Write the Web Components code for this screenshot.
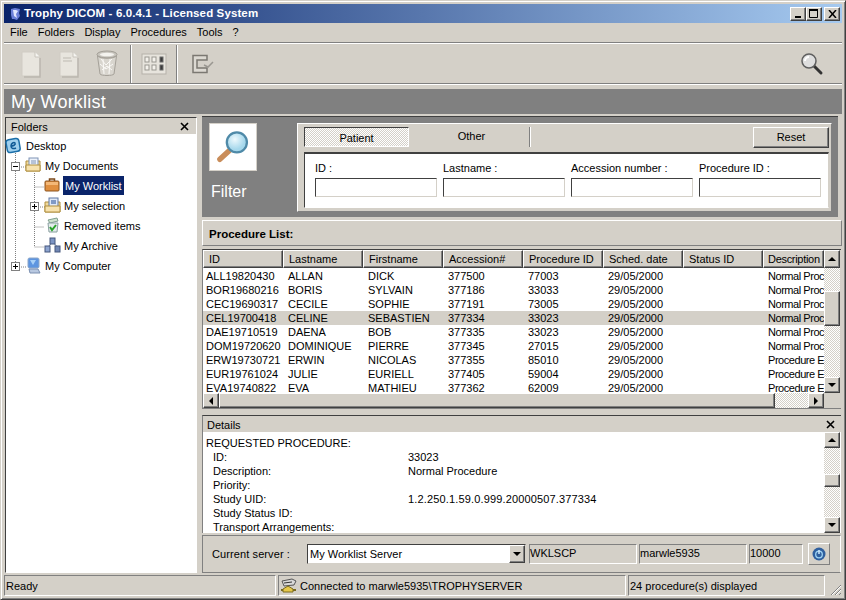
<!DOCTYPE html>
<html><head><meta charset="utf-8"><style>
html,body{margin:0;padding:0;background:#d4d0c8}
body{font:11px "Liberation Sans",Arial,sans-serif;color:#000}
</style></head><body>
<x-app>
  <x-titlebar slot="top">Trophy DICOM - 6.0.4.1 - Licensed System</x-titlebar>
  <x-menubar slot="top"><span>File</span><span>Folders</span><span>Display</span><span>Procedures</span><span>Tools</span><span>?</span></x-menubar>
  <x-toolbar slot="top"></x-toolbar>
  <x-banner slot="top">My Worklist</x-banner>
  <x-folders slot="left"></x-folders>
  <x-filter slot="right"></x-filter>
  <x-listbar slot="right">Procedure List:</x-listbar>
  <x-grid slot="right"></x-grid>
  <x-details slot="right"></x-details>
  <x-serverbar slot="right"></x-serverbar>
  <x-statusbar slot="bottom"></x-statusbar>
</x-app>
<script>
const B='#d4d0c8';
const bevelOut='border:1px solid;border-color:#fff #404040 #404040 #fff;box-shadow:inset -1px -1px 0 #808080';
const sunken='border:1px solid;border-color:#808080 #fff #fff #808080';
const dither='background:repeating-conic-gradient(#fff 0 25%,#d4d0c8 0 50%) 0 0/2px 2px';
function def(name,css,html,init){
  customElements.define(name,class extends HTMLElement{
    constructor(){super();this.attachShadow({mode:'open'});}
    connectedCallback(){
      const h=typeof html==='function'?html(this):html;
      this.shadowRoot.innerHTML='<style>'+css+'</style>'+h;
    }
  });
}
const closeX='<svg width="9" height="9" viewBox="0 0 9 9"><path d="M1 1L8 8M8 1L1 8" stroke="#000" stroke-width="1.6" fill="none"/></svg>';

def('x-app',`:host{display:flex;flex-direction:column;width:846px;height:600px;box-sizing:border-box;background:${B};
  border:1px solid;border-color:#d4d0c8 #404040 #404040 #d4d0c8;box-shadow:inset 1px 1px 0 #fff,inset -1px -1px 0 #808080;padding:3px 3px 3px 3px;overflow:hidden}
  .body{display:flex;height:459px;flex:none}
  .left{width:194px;flex:none;padding-top:3px;box-sizing:border-box}
  .right{margin-left:4px;width:640px;flex:none;display:flex;flex-direction:column;padding-top:2px;box-sizing:border-box}
  ::slotted(*){flex:none}
  `,`<slot name="top"></slot><div class="body"><div class="left"><slot name="left"></slot></div><div class="right"><slot name="right"></slot></div></div><slot name="bottom"></slot>`);

def('x-titlebar',`:host{display:flex;align-items:center;height:19px;background:linear-gradient(90deg,#0a246a,#a6caf0);color:#fff;font-weight:bold;font-size:11.5px;padding:0 2px 0 4px;box-sizing:border-box}
  .ic{margin-right:1px;display:flex}
  .t{flex:1;letter-spacing:.12px;padding-bottom:2px}
  .b{width:16px;height:14px;background:${B};box-sizing:border-box;${bevelOut};display:flex;align-items:center;justify-content:center}
  .b:last-child{margin-left:2px}`,
  `<span class="ic"><svg width="15" height="14" viewBox="0 0 15 14"><path d="M3 2l4-1 5 1-1 4 1 3-3 4-3-1-2 0-1-4z" fill="#6a7fd8"/><path d="M5 3l3 0 2 1-2 3 1 4-3-2z" fill="#dfe6ff"/></svg></span>
  <span class="t"><slot></slot></span>
  <span class="b"><svg width="8" height="8"><rect x="1" y="6" width="6" height="2"/></svg></span>
  <span class="b"><svg width="10" height="9"><path d="M.5 1.5h8v7h-8z" fill="none" stroke="#000"/><path d="M0 1h9" stroke="#000" stroke-width="2"/></svg></span>
  <span class="b"><svg width="9" height="8" viewBox="0 0 9 8"><path d="M1 0L8 8M8 0L1 8" stroke="#000" stroke-width="1.5"/></svg></span>`);

def('x-menubar',`:host{display:flex;height:20px;align-items:center;padding:0 0 2px 6px;box-sizing:border-box;border-bottom:1px solid #808080}
  ::slotted(span){margin-right:10px}`,`<slot></slot>`);

const docIcon=(lines)=>`<svg width="22" height="28" viewBox="0 0 22 28"><path d="M2 2h13l5 5v19H2z" fill="#e8e5de" stroke="#d0ccc4"/><path d="M15 2v5h5" fill="#f6f5f1" stroke="#c8c4bc"/><path d="M20 8v19H4" fill="none" stroke="#bab6ae" stroke-width="1.4"/>${lines?'<path d="M5 8h8M5 11h9" stroke="#bdb9b1"/>':''}</svg>`;
def('x-toolbar',`:host{display:flex;align-items:center;border-top:1px solid #fff;border-bottom:1px solid #808080;box-shadow:0 1px 0 #fff;box-sizing:border-box;padding-left:8px;margin-bottom:5px;height:41px}
  .i{display:flex;width:38px;justify-content:center;flex:none}
  .sep{width:2px;height:38px;background:linear-gradient(90deg,#808080 1px,#fff 1px);flex:none}
  .sp{flex:1}`,
  `<span class="i">${docIcon(0)}</span><span class="i">${docIcon(1)}</span>
   <span class="i"><svg width="24" height="27" viewBox="0 0 24 27"><ellipse cx="12" cy="4.5" rx="10" ry="3.5" fill="#c9c6bf" stroke="#a09c94"/><ellipse cx="12" cy="4.5" rx="7" ry="1.8" fill="#f4f3ef"/><path d="M2.5 6l2.5 18c1 2 13 2 14 0l2.5-18c-3 3-16 3-19 0z" fill="#d8d5ce" stroke="#a5a199"/><path d="M6 9l5 6 6-6M5 14l6 5 7-5M7 20l5-4 5 4M8 9l1 15M15 9l-1 15" stroke="#fbfaf7" stroke-width="1" fill="none"/></svg></span>
   <span style="width:4px;flex:none"></span><span class="sep"></span>
   <span class="i" style="width:44px"><svg width="26" height="22" viewBox="0 0 26 22"><rect x="1" y="1" width="24" height="20" fill="#e7e4dd" stroke="#b5b1a9"/><g fill="#f4f2ec" stroke="#9a9791"><rect x="4" y="4" width="4" height="5"/><rect x="11" y="4" width="4" height="5"/><rect x="4" y="12" width="4" height="5"/><rect x="11" y="12" width="4" height="5"/></g><g fill="#3a3a3a" stroke="#6b6b6b"><rect x="19" y="4" width="3" height="5"/><rect x="19" y="12" width="3" height="5"/></g></svg></span>
   <span class="sep"></span>
   <span class="i" style="width:50px"><svg width="24" height="20" viewBox="0 0 24 20"><path d="M16 6V1.500H2V18.500H16V14H6V6z" fill="#dcd9d2" stroke="#7b7872" stroke-width="1.500"/><path d="M13 11l4 2 5-5" fill="none" stroke="#9a9791" stroke-width="1.500"/></svg></span>
   <span class="sp"></span>
   <span style="margin-right:18px;display:flex"><svg width="24" height="24" viewBox="0 0 24 24"><path d="M13 13l8 8" stroke="#333" stroke-width="3" stroke-linecap="round"/><circle cx="9" cy="9" r="7" fill="#dedede" stroke="#5f5f5f" stroke-width="1.500"/><path d="M5 9a4 4 0 0 1 4-4" stroke="#fff" stroke-width="2" fill="none"/></svg></span>`);

def('x-banner',`:host{display:flex;align-items:center;height:25px;background:#808080;color:#fff;font-size:18px;padding:1px 0 0 7px;box-sizing:border-box;letter-spacing:.2px}`,`<slot></slot>`);

const treeIcons={
 desk:`<svg width="17" height="17" viewBox="0 0 17 17"><rect x="1.500" y="2" width="13" height="13" rx="3" transform="rotate(-10 8 8)" fill="#9fd0ee" stroke="#1a6ea8" stroke-width="1.500"/><path d="M6 9c2 0 5-1 4-3-1-1-4 0-4 3 0 3 3 3 5 2" fill="none" stroke="#0f5a96" stroke-width="1.500"/></svg>`,
 docs:`<svg width="17" height="15" viewBox="0 0 17 15"><path d="M1 4h14v10H1z" fill="#f0d89a" stroke="#b08f3f"/><rect x="4" y="1" width="9" height="9" fill="#eef3fb" stroke="#7f93b5"/><path d="M6 4h5M6 6h5" stroke="#7f93b5"/><path d="M1 8h14v6H1z" fill="#f7e2ad" stroke="#b08f3f"/></svg>`,
 work:`<svg width="17" height="16" viewBox="0 0 17 16"><path d="M5.500 4V2h5v2" fill="none" stroke="#7c4a1c" stroke-width="1.500"/><path d="M1 5q0-1 1-1h12q1 0 1 1v8q0 1-1 1H2q-1 0-1-1z" fill="#e08f3f" stroke="#8c5520"/><path d="M2 5h12v3H2z" fill="#f4b877"/></svg>`,
 sel:`<svg width="17" height="16" viewBox="0 0 17 16"><path d="M1 5h15v10H1z" fill="#f0d89a" stroke="#b08f3f"/><rect x="5" y="1" width="9" height="9" fill="#dfe9f7" stroke="#5f78a5"/><rect x="7" y="3" width="5" height="4" fill="#7f9ac6"/><path d="M1 9h15v6H1z" fill="#f7e2ad" stroke="#b08f3f"/></svg>`,
 rem:`<svg width="17" height="16" viewBox="0 0 17 16"><path d="M4 3l9-2 1 3-8 2z" fill="#cfe4cf" stroke="#7f9f8f"/><path d="M4 6h10l-1 9H5z" fill="#e4ecec" stroke="#8aa0a0"/><path d="M6 10l2 3 4-5" stroke="#28a228" stroke-width="2" fill="none"/></svg>`,
 arch:`<svg width="17" height="16" viewBox="0 0 17 16"><path d="M8.500 5L4 10M8.500 5l5 5" stroke="#6a7a98"/><rect x="6" y="1" width="5" height="6" fill="#7d95c4" stroke="#44567c"/><rect x="1" y="9" width="5" height="6" fill="#8ea5d0" stroke="#44567c"/><rect x="11" y="9" width="5" height="6" fill="#7288b5" stroke="#44567c"/></svg>`,
 comp:`<svg width="17" height="17" viewBox="0 0 17 17"><rect x="3" y="1" width="11" height="10" rx="1.500" fill="#5d95e0" stroke="#8fa8c8"/><path d="M5 3h6l-3 5z" fill="#a8d0f6"/><path d="M4 12h9l2 4H5z" fill="#b8c8e0" stroke="#7a8fb0"/></svg>`
};
const box=(p,l)=>`<span class="box" style="left:${l}px"><svg width="9" height="9"><rect x=".5" y=".5" width="8" height="8" fill="#fff" stroke="#808080"/><path d="M2 4.500h5${p?'M4.500 2v5':''}" stroke="#000"/></svg></span>`;
def('x-folders',`:host{display:flex;flex-direction:column;height:456px;box-sizing:border-box;margin-left:1px;width:192px;border:1px solid;border-color:#404040 #fff #fff #404040;background:#fff}
  .h{height:16px;background:${B};display:flex;align-items:center;justify-content:space-between;padding:1px 7px 0 5px;box-sizing:border-box;flex:none}
  .tree{position:relative;flex:1;padding-top:2px}
  .lines{position:absolute;left:0;top:-1px}
  .r{height:20px;display:flex;align-items:center;position:relative}
  .ic{position:absolute;top:1px;display:flex}
  .box{position:absolute;top:6px;display:flex}
  .tx{position:absolute;top:3px;line-height:14px;padding:0 2px;white-space:nowrap}
  .sel{background:#0a246a;color:#fff;top:0;line-height:20px;height:19px}`,
  ()=>`<div class="h"><span>Folders</span>${closeX}</div><div class="tree">
  <svg class="lines" width="100" height="140" fill="none" stroke="#808080" stroke-dasharray="1 1"><path d="M9.500 20V134M15 34h5M28.500 40V114M28.500 54h10M34 74h5M28.500 94h10M28.500 114h10M15 134h5"/></svg>
  <div class="r"><span class="ic" style="left:-1px">${treeIcons.desk}</span><span class="tx" style="left:18px">Desktop</span></div>
  <div class="r">${box(0,5)}<span class="ic" style="left:19px">${treeIcons.docs}</span><span class="tx" style="left:37px">My Documents</span></div>
  <div class="r"><span class="ic" style="left:38px">${treeIcons.work}</span><span class="tx sel" style="left:57px">My Worklist</span></div>
  <div class="r">${box(1,24)}<span class="ic" style="left:38px">${treeIcons.sel}</span><span class="tx" style="left:56px">My selection</span></div>
  <div class="r"><span class="ic" style="left:38px">${treeIcons.rem}</span><span class="tx" style="left:56px">Removed items</span></div>
  <div class="r"><span class="ic" style="left:38px">${treeIcons.arch}</span><span class="tx" style="left:56px">My Archive</span></div>
  <div class="r">${box(1,5)}<span class="ic" style="left:19px">${treeIcons.comp}</span><span class="tx" style="left:37px">My Computer</span></div>
  </div>`);

def('x-field',`:host{display:flex;flex-direction:column;width:122px;flex:none}
  .l{height:18px;line-height:17px}
  .i{height:19px;background:#fff;box-sizing:border-box;border:1px solid;border-color:#404040 #d4d0c8 #d4d0c8 #404040}`,
  `<span class="l"><slot></slot></span><span class="i"></span>`);
def('x-filter',`:host{display:flex;height:101px;width:636px;background:#808080;box-sizing:border-box;border-top:1px solid #404040;padding:6px 6px 5px 7px;flex:none}
  .lg{width:88px;flex:none;display:flex;flex-direction:column}
  .ib{width:48px;height:48px;box-sizing:border-box;background:#fff;border:1px solid #d4d0c8;display:flex;align-items:center;justify-content:center}
  .ft{color:#fff;font-size:16px;margin:12px 0 0 2px}
  .p{flex:1;background:${B};border:1px solid;border-color:#fff #808080 #808080 #fff;box-sizing:border-box;padding:3px 2px 5px 6px;display:flex;flex-direction:column}
  .tabs{display:flex;height:20px;flex:none}
  .tab{text-align:center;line-height:20px;box-sizing:border-box}
  .t1{width:105px;${dither};border:1px solid;border-color:#404040 #fff #fff #404040}
  .t2{width:116px;margin-left:5px;border-right:1px solid #808080;box-shadow:1px 0 0 #fff;line-height:19px}
  .sp{flex:1}
  .rs{width:76px;height:21px;background:${B};box-sizing:border-box;${bevelOut};text-align:center;line-height:19px}
  .w{margin-top:5px;flex:none;height:56px;background:#fff;border:1px solid;border-color:#404040 #d4d0c8 #fff #404040;box-sizing:border-box;display:flex;gap:6px;padding:6px 0 0 9px;border-top-width:2px}
  `,`<div class="lg"><div class="ib"><svg width="34" height="34" viewBox="0 0 44 44"><defs><radialGradient id="g" cx=".4" cy=".35"><stop offset="0" stop-color="#eef9fd"/><stop offset="1" stop-color="#a6d8ec"/></radialGradient></defs><path d="M17 27L5 38" stroke="#c98d5a" stroke-width="7" stroke-linecap="round"/><circle cx="27" cy="16" r="13" fill="url(#g)" stroke="#4f8aa8" stroke-width="3"/></svg></div><div class="ft">Filter</div></div>
  <div class="p"><div class="tabs"><div class="tab t1">Patient</div><div class="tab t2">Other</div><div class="sp"></div><div class="rs">Reset</div></div>
  <div class="w" style="padding-left:10px"><x-field>ID :</x-field><x-field>Lastname :</x-field><x-field>Accession number :</x-field><x-field>Procedure ID :</x-field></div></div>`);

def('x-listbar',`:host{display:block;height:26px;line-height:27px;margin-top:3px;padding-left:6px;font-weight:bold;background:${B};border:1px solid;border-color:#fff #808080 #808080 #fff;box-sizing:border-box;flex:none;font-size:11.500px}`,`<slot></slot>`);

const arrows={u:'M4 1L8 5H0z',d:'M0 1H8L4 5z',l:'M5 0V8L1 4z',r:'M1 0V8L5 4z'};
def('x-sbb',`:host{display:flex;align-items:center;justify-content:center;width:16px;height:16px;flex:none;box-sizing:border-box;background:${B};${bevelOut}}`,
  (e)=>{const a=e.getAttribute('d');const h=a=='u'||a=='d';return `<svg width="${h?8:6}" height="${h?6:8}"><path d="${arrows[a]}"/></svg>`});
def('x-vscroll',`:host{display:flex;flex-direction:column;width:16px;flex:none;${dither}}
  .s{flex:none}.t{flex:none;box-sizing:border-box;background:${B};${bevelOut}}.f{flex:1}`,
  (e)=>`<x-sbb d="u" style="height:${e.getAttribute('bh')||16}px"></x-sbb><div class="s" style="height:${e.getAttribute('a')}px"></div><div class="t" style="height:${e.getAttribute('t')}px"></div><div class="f"></div><x-sbb d="d"></x-sbb>`);
def('x-hscroll',`:host{display:flex;height:15px;flex:none;${dither}}
  .t{width:556px;box-sizing:border-box;background:${B};${bevelOut};flex:none}.f{flex:1}`,
  `<x-sbb d="l" style="height:15px"></x-sbb><div class="t"></div><div class="f"></div><x-sbb d="r" style="height:15px"></x-sbb>`);

const cols=['ID','Lastname','Firstname','Accession#','Procedure ID','Sched. date','Status ID','Description'];
const N='Normal Proc',E='Procedure E';
const rows=[['ALL19820430','ALLAN','DICK','377500','77003',N],['BOR19680216','BORIS','SYLVAIN','377186','33033',N],['CEC19690317','CECILE','SOPHIE','377191','73005',N],['CEL19700418','CELINE','SEBASTIEN','377334','33023',N],['DAE19710519','DAENA','BOB','377335','33023',N],['DOM19720620','DOMINIQUE','PIERRE','377345','27015',N],['ERW19730721','ERWIN','NICOLAS','377355','85010',E],['EUR19761024','JULIE','EURIELL','377405','59004',E],['EVA19740822','EVA','MATHIEU','377362','62009',E]];
def('x-grid',`:host{display:flex;margin-top:3px;height:160px;flex:none;border-top:1px solid #404040;border-left:1px solid #808080;box-sizing:border-box;width:639px;border-bottom:1px solid #808080}
  .m{flex:1;display:flex;flex-direction:column;min-width:0}
  .hd{display:flex;height:18px;flex:none;overflow:hidden}
  .hc{width:80px;flex:none;box-sizing:border-box;${bevelOut};background:${B};line-height:16px;padding-left:5px;white-space:nowrap}
  .hc:last-child{width:61px;padding-left:4px;letter-spacing:-.3px}
  .bd{flex:1;background:#fff;padding-top:1px;overflow:hidden}
  .r{display:flex;height:14px;line-height:14px;white-space:nowrap}
  .r.s{background:${B}}
  .c{width:80px;flex:none;box-sizing:border-box}
  .c:nth-child(1){padding-left:3px}.c:nth-child(n+2){padding-left:5px}
  .c:last-child{width:61px;padding-left:5px;letter-spacing:-.45px}
  .col{width:17px;flex:none;display:flex;flex-direction:column}`,
  `<div class="m"><div class="hd">${cols.map(c=>`<div class="hc">${c}</div>`).join('')}</div>
  <div class="bd">${rows.map((r,i)=>`<div class="r${i==3?' s':''}"><div class="c">${r[0]}</div><div class="c">${r[1]}</div><div class="c">${r[2]}</div><div class="c">${r[3]}</div><div class="c">${r[4]}</div><div class="c">29/05/2000</div><div class="c"></div><div class="c">${r[5]}</div></div>`).join('')}</div>
  <x-hscroll></x-hscroll></div>
  <div class="col"><x-vscroll a="23" t="35" bh="18" style="flex:1"></x-vscroll><div style="height:15px;flex:none;background:${B}"></div></div>`);

const det=[['REQUESTED PROCEDURE:',''],['ID:','33023'],['Description:','Normal Procedure'],['Priority:',''],['Study UID:','1.2.250.1.59.0.999.20000507.377334'],['Study Status ID:',''],['Transport Arrangements:','']];
def('x-details',`:host{display:flex;flex-direction:column;margin-top:6px;height:118px;flex:none;box-sizing:border-box;border-top:1px solid #404040;border-left:1px solid #808080;width:639px}
  .h{height:16px;background:${B};display:flex;align-items:center;justify-content:space-between;padding:1px 6px 0 4px;box-sizing:border-box;flex:none}
  .b{flex:1;display:flex;background:#fff;min-height:0}
  .t{flex:1;overflow:hidden;padding:4px 0 0 3px}
  .l{height:14px;line-height:14px;display:flex;white-space:nowrap}
  .l .k{width:202px;flex:none;padding-left:7px;box-sizing:border-box}
  .l.f .k{padding-left:0}
  .u{letter-spacing:.15px}`,
  `<div class="h"><span>Details</span>${closeX}</div><div class="b"><div class="t">${det.map((d,i)=>`<div class="l${i?'':' f'}"><span class="k">${d[0]}</span><span class="${i==4?'u':''}">${d[1]}</span></div>`).join('')}</div><x-vscroll a="26" t="13" style="margin-right:1px"></x-vscroll></div>`);

def('x-serverbar',`:host{display:flex;align-items:center;height:38px;margin-top:2px;flex:none;box-sizing:border-box;border:1px solid;border-color:#808080 #fff #808080 #808080;padding-left:9px;width:639px}
  .lb{width:95px;flex:none;letter-spacing:.1px}
  .sel{width:219px;height:20px;flex:none;box-sizing:border-box;background:#fff;border:1px solid;border-color:#404040 #d4d0c8 #d4d0c8 #404040;display:flex;align-items:center;justify-content:space-between;padding-left:2px}
  .f{height:20px;flex:none;box-sizing:border-box;${sunken};line-height:17px;margin-left:2px}
  .btn{width:22px;height:22px;margin-left:5px;flex:none;box-sizing:border-box;border:1px solid;border-color:#fff #808080 #808080 #fff;display:flex;align-items:center;justify-content:center}`,
  `<span class="lb">Current server :</span><div class="sel"><span>My Worklist Server</span><x-sbb d="d" style="height:18px"></x-sbb></div>
  <div class="f" style="width:108px;margin-left:3px">WKLSCP</div><div class="f" style="width:108px">marwle5935</div><div class="f" style="width:54px">10000</div>
  <div class="btn"><svg width="14" height="14" viewBox="0 0 14 14"><circle cx="7" cy="7" r="6.500" fill="#2f5f9e"/><circle cx="7" cy="7.500" r="3.300" fill="none" stroke="#9fd4f5" stroke-width="1.300"/><path d="M7 3v4" stroke="#cfe9fb" stroke-width="1.500"/></svg></div>`);

def('x-statusbar',`:host{display:flex;height:21px;margin-top:2px;flex:none;gap:2px;align-items:stretch}
  .c{${sunken};box-sizing:border-box;padding:1px 0 0 1px;white-space:nowrap;overflow:hidden;display:flex;align-items:center}
  .g{flex:1;display:flex;align-items:flex-end;justify-content:flex-end}`,
  `<div class="c" style="width:272px">Ready</div><div class="c" style="width:348px"><svg width="17" height="16" viewBox="0 0 17 16" style="margin-right:3px;flex:none"><path d="M2 3l10-2 4 2-2 4-10 1z" fill="#d8d8d8" stroke="#555"/><path d="M4 5l8-1" stroke="#333"/><path d="M8 8v3M1 12h15" stroke="#7a6a20" stroke-width="2"/><path d="M3 11l5-3 5 3v3H3z" fill="#e6c84a" stroke="#7a6a20"/></svg>Connected to marwle5935\\TROPHYSERVER</div><div class="c" style="width:197px">24 procedure(s) displayed</div>
  <div class="g"><svg width="13" height="13" stroke-width="1"><path d="M12 2L2 12M12 6L6 12M12 10L10 12" stroke="#808080"/><path d="M12 3L3 12M12 7L7 12" stroke="#fff"/></svg></div>`);
</script>
</body></html>
